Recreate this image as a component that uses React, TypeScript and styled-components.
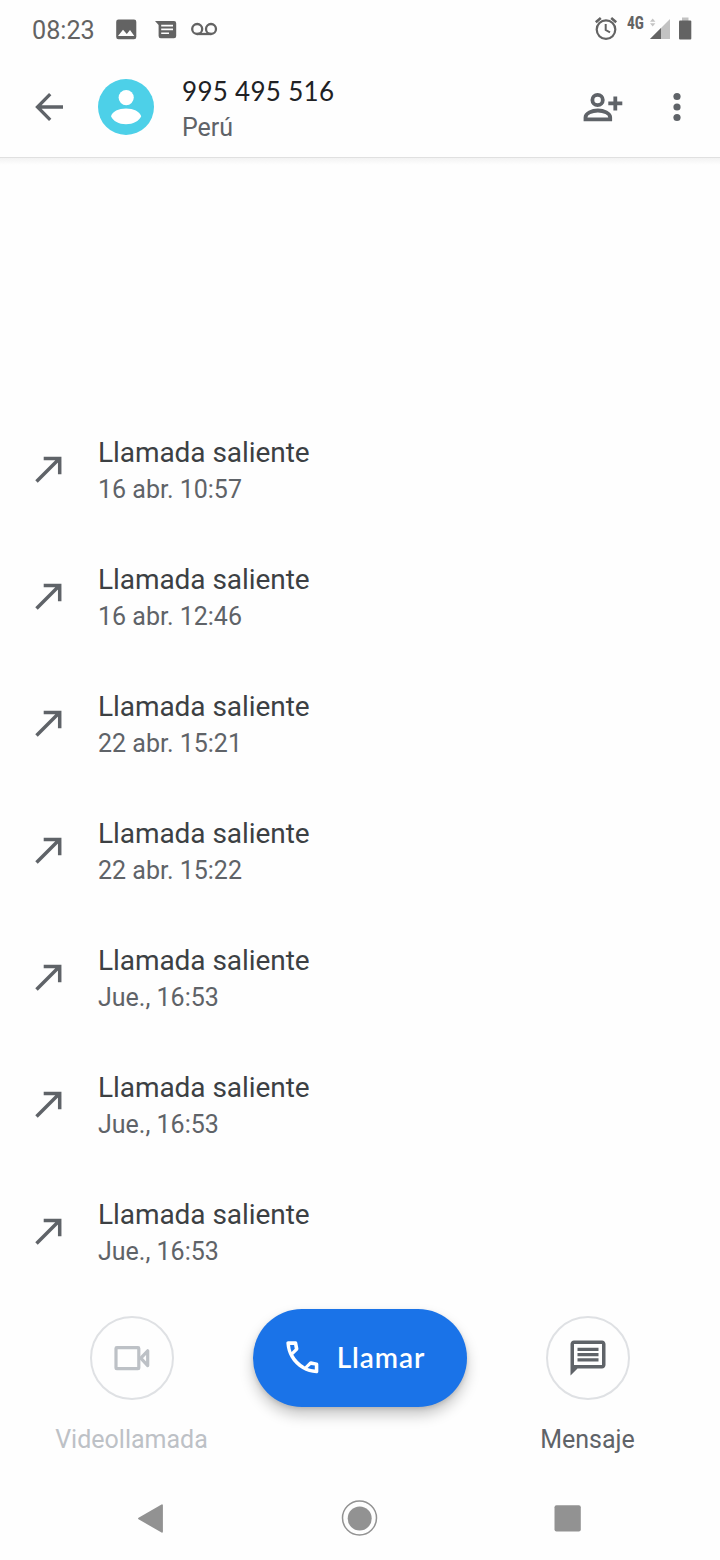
import React from "react";
import styled, { createGlobalStyle } from "styled-components";

const GlobalStyle = createGlobalStyle`
  * { box-sizing: border-box; }
  body { margin: 0; background: #fefefe; }
  svg { display: block; flex: none; }
`;

const grey = "#5f6368";

const Screen = styled.div`
  width: 720px;
  height: 1560px;
  display: flex;
  flex-direction: column;
  background: #fefefe;
  font-family: Roboto, "Liberation Sans", sans-serif;
  overflow: hidden;
`;

const StatusBar = styled.div`
  height: 58px;
  padding: 0 28px 0 32px;
  display: flex;
  flex: none;
  justify-content: space-between;
  color: #636363;
`;

const StatusGroup = styled.div`
  display: flex;
  align-items: flex-start;
`;

const Clock = styled.span`
  width: 84px;
  padding-top: 16px;
  font-size: 25.2px;
  line-height: 30px;
  white-space: nowrap;
`;

const NetworkType = styled.span`
  width: 23px;
  padding-top: 13px;
  font-family: "Roboto Condensed", Roboto, sans-serif;
  font-size: 18px;
  line-height: 20px;
  font-weight: 700;
  transform: scaleX(0.86);
  transform-origin: left;
`;

const Header = styled.header`
  height: 100px;
  padding: 0 32px 1px;
  display: flex;
  align-items: center;
  flex: none;
  border-bottom: 1px solid #e0e0e0;
`;

const Avatar = styled.div`
  width: 56px;
  height: 56px;
  margin-left: 32px;
  border-radius: 50%;
  background: #4dd0e8;
`;

const Contact = styled.div`
  flex: 1;
  display: flex;
  flex-direction: column;
  gap: 1px;
  margin-left: 28px;
  padding-top: 4px;
`;

const PhoneNumber = styled.div`
  font-family: Lato, sans-serif;
  font-size: 26px;
  line-height: 36px;
  letter-spacing: 0.3px;
  color: #202124;
  white-space: nowrap;
`;

const Secondary = styled.div`
  font-size: 25px;
  line-height: 36px;
  color: ${grey};
  white-space: nowrap;
`;

const History = styled.main`
  flex: 1;
  display: flex;
  flex-direction: column;
  justify-content: flex-end;
  background: linear-gradient(#f3f3f3, #fefefe 7px);
`;

const CallRow = styled.div`
  height: 127px;
  padding-left: 32px;
  display: flex;
  align-items: center;
  gap: 32px;
`;

const CallText = styled.div`
  padding-top: 2px;
`;

const CallTitle = styled.div`
  font-size: 28px;
  line-height: 38px;
  letter-spacing: -0.06px;
  color: #3c4043;
  white-space: nowrap;
`;

const Actions = styled.footer`
  height: 181px;
  padding: 14px 18px 0;
  display: grid;
  grid-template-columns: repeat(3, 228px);
  justify-items: center;
  align-items: start;
  flex: none;
`;

const Action = styled.div<{ $disabled?: boolean }>`
  padding-top: 7px;
  display: flex;
  flex-direction: column;
  align-items: center;
  color: ${(p) => (p.$disabled ? "#bdc1c6" : grey)};
`;

const RoundButton = styled.div`
  width: 84px;
  height: 84px;
  display: flex;
  align-items: center;
  justify-content: center;
  border: 2px solid #dfe1e4;
  border-radius: 50%;
`;

const ActionLabel = styled.div`
  margin-top: 22px;
  padding-right: 1px;
  font-size: 25px;
  line-height: 36px;
  white-space: nowrap;
`;

const CallButton = styled.div`
  width: 214px;
  height: 98px;
  padding: 0 0 1px 28px;
  display: flex;
  align-items: center;
  border-radius: 49px;
  background: #1a73e8;
  color: #fff;
  box-shadow: 0 8px 14px rgba(0, 0, 0, 0.22), 0 2px 4px rgba(0, 0, 0, 0.12);
`;

const CallLabel = styled.span`
  margin-left: 13px;
  padding-bottom: 2px;
  font-family: Lato, sans-serif;
  font-size: 28px;
  font-weight: 600;
  letter-spacing: 0.95px;
`;

const NavBar = styled.nav`
  height: 84px;
  padding: 0 138px;
  display: flex;
  justify-content: space-between;
  align-items: center;
  flex: none;
`;

const ImageIcon = () => (
  <svg width="39" height="58" viewBox="116 0 39 58">
    <path fillRule="evenodd" fill="#636363" d="M118.500 19.500h15.500a2.300 2.300 0 0 1 2.300 2.300v15.200a2.300 2.300 0 0 1-2.300 2.300h-15.500a2.300 2.300 0 0 1-2.300-2.300v-15.200a2.300 2.300 0 0 1 2.300-2.300zM118 36h16.300l-4.300-6-3.200 4-3.800-4.300z" />
  </svg>
);

const MessagesIcon = () => (
  <svg width="36" height="58" viewBox="155 0 36 58">
    <path fillRule="evenodd" fill="#636363" d="M155 21h19a2.200 2.200 0 0 1 2.200 2.200v12.800a2.200 2.200 0 0 1-2.200 2.200h-13.200a2.200 2.200 0 0 1-2.200-2.200V25zM161.200 24.800v1.700h11.800v-1.700zM161.200 28.600v1.700h11.800v-1.700zM161.200 32.400v1.700h7.800v-1.700z" />
  </svg>
);

const VoicemailIcon = () => (
  <svg width="28" height="58" viewBox="191 0 28 58" fill="none" stroke="#636363" strokeWidth="2.300">
    <circle cx="197.200" cy="29" r="5" />
    <circle cx="211" cy="29" r="5" />
    <path d="M197.200 34H211" />
  </svg>
);

const AlarmIcon = () => (
  <svg width="33" height="58" viewBox="594 0 33 58" fill="none" stroke="#636363" strokeWidth="2.200">
    <circle cx="606" cy="29.600" r="9.300" />
    <path d="M605.700 24v6l4.300 2.400" strokeWidth="2" />
    <path d="M595.800 22.200l5-4.200M616.200 22.200l-5-4.200" strokeWidth="2.600" />
  </svg>
);

const SignalBatteryIcon = () => (
  <svg width="42" height="58" viewBox="650 0 42 58">
    <path fill="#c4c4c4" d="M650 21.700l2.700-3.200 2.700 3.200zM650 23.300l2.700 3.200 2.700-3.200z" />
    <path fill="#c2c2c2" d="M670 19v20h-20z" />
    <path fill="#636363" d="M661 28v11h-11z" />
    <path fill="#c2c2c2" d="M682 17.500h6.500V21H682z" />
    <rect x="679" y="20.500" width="12.300" height="19" rx="1" fill="#636363" />
  </svg>
);

const BackIcon = () => (
  <svg width="34" height="34" viewBox="32 90 34 34" fill="none" stroke={grey} strokeWidth="3.300">
    <path d="M63 107H37.500M50.200 94.200L37.500 107l12.700 12.800" />
  </svg>
);

const PersonGlyph = () => (
  <svg width="56" height="56" viewBox="98 79 56 56" fill="#fff">
    <circle cx="126.200" cy="97.600" r="7.600" />
    <path d="M111 116.300C112.500 111.500 118.500 108.600 126 108.600s13.700 2.900 15.200 7.700c-2.200 4.800-8 8-15.200 8s-12.800-3.200-15-8z" />
  </svg>
);

const AddPersonIcon = () => (
  <svg width="78" height="38" viewBox="583 88 78 38" fill="none" stroke={grey} strokeWidth="3.800">
    <circle cx="597.600" cy="100" r="5.200" />
    <path d="M585.500 119.300h24.700v-1.800c0-4.200-6.400-7-12.300-7s-12.400 2.800-12.400 7zM608.300 103.400h14M615.300 96.400v14" />
  </svg>
);

const MoreIcon = () => (
  <svg width="27" height="38" viewBox="661 88 27 38" fill={grey}>
    <circle cx="677" cy="96.500" r="3.600" />
    <circle cx="677" cy="107" r="3.600" />
    <circle cx="677" cy="117.500" r="3.600" />
  </svg>
);

const OutgoingIcon = () => (
  <svg width="34" height="34" viewBox="32 453 34 34" fill="none" stroke={grey} strokeWidth="3.500">
    <path d="M36.500 481.500L59.500 458.500M43.700 458.400H59.700V474.300" />
  </svg>
);

const VideoIcon = () => (
  <svg width="42" height="42" viewBox="111 1337 42 42" fill="none" stroke="#bdc1c6" strokeWidth="3.200" strokeLinejoin="round">
    <rect x="116" y="1347.700" width="22.800" height="21" rx="0.800" />
    <path d="M147.700 1350.800v14.800l-6.900-7.400z" />
  </svg>
);

const PhoneIcon = () => (
  <svg width="42.700" height="42.700" viewBox="0 0 24 24" fill="#fff">
    <path
      fillRule="evenodd"
      d="M16.020 14.460l-2.620 2.620a16.141 16.141 0 0 1-6.500-6.500l2.620-2.620a.98.98 0 0 0 .27-.9L9.150 3.800c-.1-.46-.51-.8-.98-.8H4.020c-.56 0-1.030.47-1 1.030.17 2.910 1.040 5.630 2.430 8.010 1.570 2.690 3.810 4.930 6.500 6.500 2.380 1.390 5.100 2.260 8.010 2.430.56.030 1.030-.44 1.030-1v-4.150c0-.48-.34-.89-.8-.98l-3.260-.65c-.33-.07-.67.04-.91.27zM5.100 5h2.250l.4 2.200-1.800 1.850C5.500 7.800 5.200 6.400 5.100 5zM19 18.900v-2.250l-2.200-.4-1.850 1.800c1.250.45 2.650.75 4.050.85z"
    />
  </svg>
);

const ChatIcon = () => (
  <svg width="42" height="42" viewBox="0 0 24 24" fill={grey}>
    <path fillRule="evenodd" d="M4 2h16c1.100 0 2 .9 2 2v12c0 1.100-.9 2-2 2H6l-4 4V4c0-1.100.9-2 2-2zM4 4v12h16V4zM6 12.100h12V14H6zM6 9.100h12V11H6zM6 6.100h12V8H6z" />
  </svg>
);

const calls = [
  "16 abr. 10:57",
  "16 abr. 12:46",
  "22 abr. 15:21",
  "22 abr. 15:22",
  "Jue., 16:53",
  "Jue., 16:53",
  "Jue., 16:53",
];

export default function App() {
  return (
    <Screen>
      <GlobalStyle />
      <StatusBar>
        <StatusGroup>
          <Clock>08:23</Clock>
          <ImageIcon />
          <MessagesIcon />
          <VoicemailIcon />
        </StatusGroup>
        <StatusGroup>
          <AlarmIcon />
          <NetworkType>4G</NetworkType>
          <SignalBatteryIcon />
        </StatusGroup>
      </StatusBar>
      <Header>
        <BackIcon />
        <Avatar>
          <PersonGlyph />
        </Avatar>
        <Contact>
          <PhoneNumber>995 495 516</PhoneNumber>
          <Secondary>Perú</Secondary>
        </Contact>
        <AddPersonIcon />
        <MoreIcon />
      </Header>
      <History>
        {calls.map((time, i) => (
          <CallRow key={i}>
            <OutgoingIcon />
            <CallText>
              <CallTitle>Llamada saliente</CallTitle>
              <Secondary>{time}</Secondary>
            </CallText>
          </CallRow>
        ))}
      </History>
      <Actions>
        <Action $disabled>
          <RoundButton>
            <VideoIcon />
          </RoundButton>
          <ActionLabel>Videollamada</ActionLabel>
        </Action>
        <CallButton>
          <PhoneIcon />
          <CallLabel>Llamar</CallLabel>
        </CallButton>
        <Action>
          <RoundButton>
            <ChatIcon />
          </RoundButton>
          <ActionLabel>Mensaje</ActionLabel>
        </Action>
      </Actions>
      <NavBar>
        <svg width="26" height="36" viewBox="138 1500 26 36">
          <path d="M139 1518.500L162 1505.200V1531.800z" fill="#929292" stroke="#929292" strokeWidth="1.800" strokeLinejoin="round" />
        </svg>
        <svg width="38" height="38" viewBox="340 1498.500 38 38">
          <circle cx="359.500" cy="1517.500" r="17" fill="none" stroke="#929292" strokeWidth="1.500" />
          <circle cx="359.700" cy="1518" r="12" fill="#929292" />
        </svg>
        <svg width="28" height="36" viewBox="554 1500 28 36">
          <rect x="554.500" y="1505.300" width="26.300" height="26.300" rx="2" fill="#929292" />
        </svg>
      </NavBar>
    </Screen>
  );
}
